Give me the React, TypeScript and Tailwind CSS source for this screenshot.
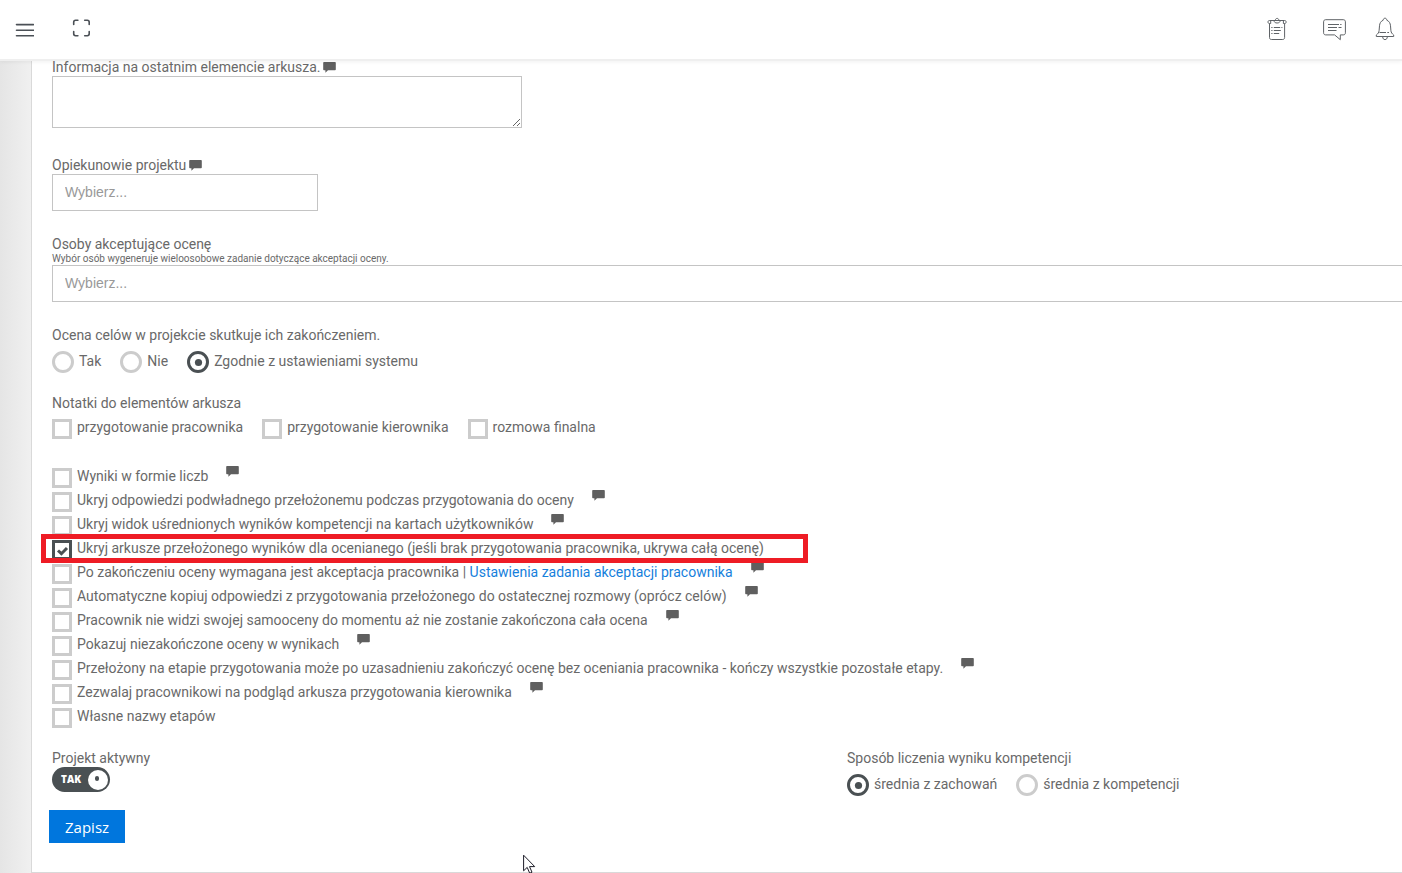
import { useState, type ReactNode } from "react";

function CommentIcon({ className = "" }: { className?: string }) {
  return (
    <svg viewBox="0 0 13 11" className={`h-[11px] w-[13px] shrink-0 text-[#5f5f5f] ${className}`} aria-hidden="true">
      <path fill="currentColor" d="M1 0h11c.5 0 .8.3.8.8v6.600c0 .5-.3.8-.8.8H5L2.400 10.800V8.200H1c-.5 0-.8-.3-.8-.8V.8C.2.3.5 0 1 0z" />
    </svg>
  );
}

function CheckOption({
  id,
  children,
  defaultChecked = false,
  comment = false,
  highlighted = false,
}: {
  id: string;
  children: ReactNode;
  defaultChecked?: boolean;
  comment?: boolean;
  highlighted?: boolean;
}) {
  return (
    <div className="relative flex h-6 w-fit items-end">
      <span className="relative block size-5 shrink-0">
        <input
          id={id}
          type="checkbox"
          defaultChecked={defaultChecked}
          className="peer block size-5 appearance-none border-3 border-[#cccccc] bg-white checked:border-[#4a5053]"
        />
        <svg viewBox="0 0 20 20" className="pointer-events-none absolute inset-0 hidden size-5 peer-checked:block" aria-hidden="true">
          <path d="M6 10.500l3.400 3.200L15 8" fill="none" stroke="#4a5053" strokeWidth="3" />
        </svg>
      </span>
      <label htmlFor={id} className="pl-[5px] leading-6 whitespace-nowrap">
        {children}
      </label>
      {comment && <CommentIcon className="mt-0.5 ml-[18px] self-start" />}
      {highlighted && (
        <span className="pointer-events-none absolute -top-0.5 -right-11 -left-[11px] z-10 h-[29px] border-5 border-[#ee1c25]" />
      )}
    </div>
  );
}

function RadioOption({
  id,
  name,
  children,
  defaultChecked = false,
}: {
  id: string;
  name: string;
  children: ReactNode;
  defaultChecked?: boolean;
}) {
  return (
    <div className="flex items-start">
      <span className="relative block size-[22px] shrink-0">
        <input
          id={id}
          name={name}
          type="radio"
          defaultChecked={defaultChecked}
          className="peer block size-[22px] appearance-none rounded-full border-3 border-[#cccccc] bg-white checked:border-[#4a5053]"
        />
        <svg viewBox="0 0 22 22" className="pointer-events-none absolute inset-0 hidden size-[22px] peer-checked:block" aria-hidden="true">
          <circle cx="11.5" cy="11.5" r="3.6" fill="#4a5053" />
        </svg>
      </span>
      <label htmlFor={id} className="pl-[5px] leading-5 whitespace-nowrap">
        {children}
      </label>
    </div>
  );
}

const options: { id: string; text: ReactNode; comment?: boolean; checked?: boolean; highlighted?: boolean }[] = [
  { id: "wyniki-liczby", text: "Wyniki w formie liczb", comment: true },
  { id: "ukryj-odpowiedzi", text: "Ukryj odpowiedzi podwładnego przełożonemu podczas przygotowania do oceny", comment: true },
  { id: "ukryj-widok", text: "Ukryj widok uśrednionych wyników kompetencji na kartach użytkowników", comment: true },
  {
    id: "ukryj-arkusze",
    text: "Ukryj arkusze przełożonego wyników dla ocenianego (jeśli brak przygotowania pracownika, ukrywa całą ocenę)",
    checked: true,
    highlighted: true,
  },
  {
    id: "akceptacja",
    text: (
      <>
        Po zakończeniu oceny wymagana jest akceptacja pracownika |{" "}
        <a href="#akceptacja" className="text-[#1580dc]">
          Ustawienia zadania akceptacji pracownika
        </a>
      </>
    ),
    comment: true,
  },
  { id: "kopiuj", text: "Automatyczne kopiuj odpowiedzi z przygotowania przełożonego do ostatecznej rozmowy (oprócz celów)", comment: true },
  { id: "samoocena", text: "Pracownik nie widzi swojej samooceny do momentu aż nie zostanie zakończona cała ocena", comment: true },
  { id: "niezakonczone", text: "Pokazuj niezakończone oceny w wynikach", comment: true },
  {
    id: "bez-oceniania",
    text: "Przełożony na etapie przygotowania może po uzasadnieniu zakończyć ocenę bez oceniania pracownika - kończy wszystkie pozostałe etapy.",
    comment: true,
  },
  { id: "podglad", text: "Zezwalaj pracownikowi na podgląd arkusza przygotowania kierownika", comment: true },
  { id: "nazwy", text: "Własne nazwy etapów" },
];

function TopBar() {
  return (
    <header className="relative z-20 flex h-[61px] items-start justify-between border-b-2 border-[#efefef] bg-white pr-[7px] pl-[15px] text-[#4b5056] shadow-[0_1px_4px_rgba(0,0,0,0.06)]">
      <div className="flex items-start gap-[38px] pt-[19px]">
        <button type="button" aria-label="Menu" className="pt-1">
          <svg viewBox="0 0 19 15" className="h-[15px] w-[19px]" fill="none" stroke="currentColor" strokeWidth="1.6" strokeLinecap="round">
            <path d="M1.500 1.600h17M1.500 7.200h17M1.500 12.800h17" />
          </svg>
        </button>
        <button type="button" aria-label="Pełny ekran">
          <svg viewBox="0 0 19 19" className="size-[19px]" fill="none" stroke="currentColor" strokeWidth="1.6" strokeLinecap="round">
            <path d="M1.700 5.500V3.200c0-1.200.7-1.900 1.900-1.900h2.300M12.700 1.300h2.600c1.200 0 1.900.7 1.900 1.900v2.300M17.200 12.500v2.300c0 1.200-.7 1.900-1.900 1.900h-2.600M5.900 16.700H3.600c-1.200 0-1.900-.7-1.900-1.900v-2.300" />
          </svg>
        </button>
      </div>
      <div className="flex items-start pt-[17px] text-[#5f6367]">
        <button type="button" aria-label="Zadania">
          <svg viewBox="0 0 20 24" className="h-6 w-5" fill="none" stroke="currentColor" strokeWidth="1">
            <path d="M2.500 6.500V20.500c0 1.200.6 2 1.900 2h11.300c1.200 0 1.900-.8 1.900-2V6.500" />
            <path d="M6.800 3.500H2.500c-1 0-1.500.5-1.500 1.500s.5 1.500 1.500 1.500h1.200V4M13 3.500h4.600c1 0 1.500.5 1.500 1.500s-.5 1.500-1.500 1.500h-1.200V4" />
            <path d="M7 3.500h1.200C8.400 2.100 9.100 1.400 10.100 1.400s1.700.7 1.900 2.100h1.200c0 1.500-1.100 2.500-3.100 2.500S7 5 7 3.500zM4.500 3.500h11" />
            <path d="M4.300 10.500h1.200M6.800 10.500h6.400M14.400 10.500h1M4.300 13.500h1.200M6.800 13.500h7M4.300 16.500h1.200M6.800 16.500h5.400" />
          </svg>
        </button>
        <button type="button" aria-label="Wiadomości" className="ml-9">
          <svg viewBox="0 0 23 24" className="h-6 w-[23px]" fill="none" stroke="currentColor" strokeWidth="1">
            <path d="M2.700 2.700h17.600c1.300 0 2.100.8 2.100 2.100v11c0 1.300-.8 2.100-2.100 2.100h-3v4.800l-5.700-4.800H2.700c-1.300 0-2.100-.8-2.100-2.100v-11c0-1.300.8-2.100 2.100-2.100z" />
            <path d="M5 7.500h11M17.200 7.500h1.300M5 10.500h9M15.500 10.500h3M5 13.500h8.500" />
          </svg>
        </button>
        <button type="button" aria-label="Powiadomienia" className="ml-[29px]">
          <svg viewBox="0 0 20 24" className="h-6 w-5" fill="none" stroke="currentColor" strokeWidth="1">
            <path d="M8.200 3.200C8.300 2 8.900 1.200 10 1.200s1.700.8 1.800 2c2.400 1 3.500 3 3.700 5.600l.4 4.800c.2 2 1.200 3.200 2.800 4.400v1.500H1.300V18c1.600-1.200 2.600-2.400 2.800-4.400l.4-4.800c.2-2.600 1.300-4.600 3.700-5.600z" />
            <path d="M7.700 19.700c0 1.900.9 2.900 2.300 2.900s2.300-1 2.300-2.900M4.500 15.500h6.500M12.300 15.500h1.700" />
          </svg>
        </button>
      </div>
    </header>
  );
}

export default function App() {
  const [active, setActive] = useState(true);

  return (
    <div className="min-h-screen overflow-x-hidden bg-[linear-gradient(to_right,#e5e5e5,#f0f0f0_31px)] font-[Roboto,sans-serif] text-[14px] leading-[18px] text-[#696969]">
      <TopBar />
      <main className="-mt-[3px] ml-[31px] border-b border-l border-[#d9d9d9] bg-white pb-[29px] pl-5">
        <form onSubmit={(e) => e.preventDefault()}>
          <div>
            <div className="flex items-center gap-[3px]">
              <label htmlFor="informacja">Informacja na ostatnim elemencie arkusza.</label>
              <CommentIcon />
            </div>
            <textarea id="informacja" className="block h-[52px] w-[470px] resize border border-[#c4c4c4] bg-white px-3 py-2" />
          </div>

          <div className="mt-7">
            <div className="flex items-center gap-[3px]">
              <label htmlFor="opiekunowie">Opiekunowie projektu</label>
              <CommentIcon />
            </div>
            <input
              id="opiekunowie"
              type="text"
              placeholder="Wybierz..."
              className="block h-[37px] w-[266px] border border-[#c4c4c4] bg-white px-3 pb-0.5 font-['Liberation_Sans',sans-serif] placeholder:text-[#999999]"
            />
          </div>

          <div className="mt-6">
            <label htmlFor="osoby" className="block">
              Osoby akceptujące ocenę
            </label>
            <p className="text-[10px] leading-3">Wybór osób wygeneruje wieloosobowe zadanie dotyczące akceptacji oceny.</p>
            <input
              id="osoby"
              type="text"
              placeholder="Wybierz..."
              className="block h-[37px] w-full border border-r-0 border-[#c4c4c4] bg-white px-3 pb-0.5 font-['Liberation_Sans',sans-serif] placeholder:text-[#999999]"
            />
          </div>

          <fieldset className="mt-6">
            <legend>Ocena celów w projekcie skutkuje ich zakończeniem.</legend>
            <div className="mt-[7px] flex gap-[19px]">
              <RadioOption id="cele-tak" name="cele">Tak</RadioOption>
              <RadioOption id="cele-nie" name="cele">Nie</RadioOption>
              <RadioOption id="cele-system" name="cele" defaultChecked>
                Zgodnie z ustawieniami systemu
              </RadioOption>
            </div>
          </fieldset>

          <fieldset className="mt-[21px]">
            <legend>Notatki do elementów arkusza</legend>
            <div className="mt-[3px] flex gap-[19px]">
              <CheckOption id="notatki-pracownik">przygotowanie pracownika</CheckOption>
              <CheckOption id="notatki-kierownik">przygotowanie kierownika</CheckOption>
              <CheckOption id="notatki-rozmowa">rozmowa finalna</CheckOption>
            </div>
          </fieldset>

          <div className="mt-[25px]">
            {options.map((o) => (
              <CheckOption key={o.id} id={o.id} comment={o.comment} defaultChecked={o.checked} highlighted={o.highlighted}>
                {o.text}
              </CheckOption>
            ))}
          </div>

          <div className="mt-[21px] grid grid-cols-[53fr_37fr]">
            <div>
              <label htmlFor="aktywny" className="block">
                Projekt aktywny
              </label>
              <label className="relative flex h-[25px] w-[58px] items-center justify-between rounded-full bg-[#4a5053] pr-0.5 pl-[9px]">
                <input
                  id="aktywny"
                  type="checkbox"
                  role="switch"
                  checked={active}
                  onChange={(e) => setActive(e.target.checked)}
                  className="absolute inset-0 appearance-none rounded-full"
                />
                <span className="pb-0.5 font-['Open_Sans',sans-serif] text-[10px] leading-4 font-extrabold text-white">
                  {active ? "TAK" : "NIE"}
                </span>
                <span className="flex size-5 items-center justify-center rounded-full bg-white">
                  <span className="mr-0.5 mb-0.5 h-[5px] w-1 rounded-full bg-[#4a5053]" />
                </span>
              </label>
            </div>
            <fieldset>
              <legend>Sposób liczenia wyniku kompetencji</legend>
              <div className="mt-[7px] flex gap-[19px]">
                <RadioOption id="srednia-zachowan" name="srednia" defaultChecked>
                  średnia z zachowań
                </RadioOption>
                <RadioOption id="srednia-kompetencji" name="srednia">
                  średnia z kompetencji
                </RadioOption>
              </div>
            </fieldset>
          </div>

          <button
            type="submit"
            className="mt-[14px] -ml-[3px] block h-[33px] bg-[#0076dd] px-4 font-['Open_Sans',sans-serif] text-[15px] font-medium text-white"
          >
            Zapisz
          </button>
        </form>
      </main>

      <svg viewBox="0 0 13 20" className="pointer-events-none fixed bottom-[-1px] left-[523px] z-30 h-5 w-[13px]" aria-hidden="true">
        <path d="M.6 1.200v15.600l3.600-3.400 2.500 5.800 2.300-1-2.500-5.600h5.200z" fill="#fff" stroke="#1c1c28" strokeWidth="1" />
      </svg>
    </div>
  );
}
